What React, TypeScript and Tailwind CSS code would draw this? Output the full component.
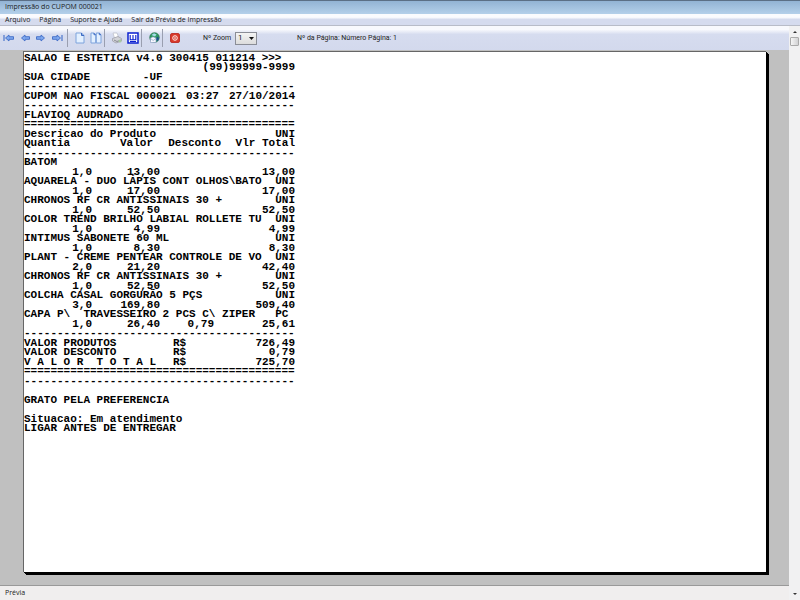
import { ReactNode } from "react";

interface Item {
  name: string;
  unit: string;
  qty: string;
  price: string;
  discount?: string;
  total: string;
}

const items: Item[] = [
  { name: "BATOM", unit: "", qty: "1,0", price: "13,00", total: "13,00" },
  { name: "AQUARELA - DUO LÁPIS CONT OLHOS\\BATO", unit: "UNI", qty: "1,0", price: "17,00", total: "17,00" },
  { name: "CHRONOS RF CR ANTISSINAIS 30 +", unit: "UNI", qty: "1,0", price: "52,50", total: "52,50" },
  { name: "COLOR TREND BRILHO LABIAL ROLLETE TU", unit: "UNI", qty: "1,0", price: "4,99", total: "4,99" },
  { name: "INTIMUS SABONETE 60 ML", unit: "UNI", qty: "1,0", price: "8,30", total: "8,30" },
  { name: "PLANT - CREME PENTEAR CONTROLE DE VO", unit: "UNI", qty: "2,0", price: "21,20", total: "42,40" },
  { name: "CHRONOS RF CR ANTISSINAIS 30 +", unit: "UNI", qty: "1,0", price: "52,50", total: "52,50" },
  { name: "COLCHA CASAL GORGURÃO 5 PÇS", unit: "UNI", qty: "3,0", price: "169,80", total: "509,40" },
  { name: "CAPA P\\  TRAVESSEIRO 2 PCS C\\ ZIPER", unit: "PC ", qty: "1,0", price: "26,40", discount: "0,79", total: "25,61" },
];

const totals = [
  { label: "VALOR PRODUTOS", value: "726,49" },
  { label: "VALOR DESCONTO", value: "0,79" },
  { label: "V A L O R  T O T A L", value: "725,70" },
];

const menus = ["Arquivo", "Página", "Suporte e Ajuda", "Sair da Prévia de Impressão"];

const Arrow = ({ flip, bar }: { flip?: boolean; bar?: boolean }) => (
  <svg viewBox="0 0 12 10" className={`h-[10px] w-[12px] ${flip ? "-scale-x-100" : ""}`}>
    {bar && <path d="M1 2v6" stroke="#4a76cc" strokeWidth="1.2" />}
    <path d="M2.5 5 6 2v1.700h4.500v2.600H6V8z" fill="#7ea8ee" stroke="#3f6cc6" strokeWidth="0.9" strokeLinejoin="round" />
  </svg>
);

const PageIcon = () => (
  <svg viewBox="0 0 12 12" className="h-3 w-3">
    <path d="M2 1h5.5L10 3.5V11H2z" fill="#e3f0ff" stroke="#7da3dc" />
    <path d="M7.5 1v2.5H10" fill="#7da3dc" stroke="#3c69c4" />
  </svg>
);

const TwoPagesIcon = () => (
  <svg viewBox="0 0 12 12" className="h-3 w-3">
    <path d="M1 1h3l1.700 1.700V11H1zM6.300 1h3L11 2.700V11H6.300z" fill="#e3f0ff" stroke="#7da3dc" />
    <path d="M4 1v1.700h1.700M9.300 1v1.700H11" fill="none" stroke="#3c69c4" />
  </svg>
);

const PrinterIcon = () => (
  <svg viewBox="0 0 12 12" className="h-3 w-3">
    <path d="M2 1h4l1.500 4-4 1z" fill="#fff" stroke="#b9bcc6" strokeWidth="0.7" />
    <path d="M1.500 6.500 7 4.500l3.500 2v2.500L5 11 1.500 9z" fill="#d2d3d8" stroke="#989aa3" strokeWidth="0.7" />
    <path d="m3 8 3 1.500 4-1.500" fill="none" stroke="#777a85" strokeWidth="0.8" />
    <circle cx="9" cy="9" r="1.500" fill="#a9c8a0" />
  </svg>
);

const WordIcon = () => (
  <svg viewBox="0 0 12 12" className="h-3 w-3">
    <rect x="1" y="1" width="10" height="10" fill="#fff" stroke="#0a1fd0" strokeWidth="1.500" />
    <path d="M3.200 3v4.800h5.600V3M6 3v4.800M3 9.500h6" fill="none" stroke="#0a1fd0" strokeWidth="1.100" />
  </svg>
);

const SendIcon = () => (
  <svg viewBox="0 0 12 12" className="h-3 w-3">
    <circle cx="6.500" cy="5.500" r="4.800" fill="#2f9a62" stroke="#176341" strokeWidth="0.6" />
    <path d="M3.500 3 6 1.200 8.500 2.500 7 4.500z" fill="#a5dce8" />
    <path d="M9 4.500 11 6l-1 3-2-1z" fill="#1c4f8f" />
    <path d="M2.500 6 5 4.800 8 6v4.500H2.500z" fill="#f7f8ff" stroke="#8398bd" strokeWidth="0.6" />
    <path d="m2.500 6.500 2.700 2L8 6.500" fill="none" stroke="#8398bd" strokeWidth="0.6" />
  </svg>
);

const CloseIcon = () => (
  <svg viewBox="0 0 12 12" className="h-3 w-3">
    <rect x="1.500" y="1.500" width="9" height="9" rx="1.500" fill="#d93a2b" stroke="#b81f18" strokeWidth="0.8" />
    <circle cx="6" cy="6" r="2.300" fill="none" stroke="#fff" strokeWidth="0.9" />
    <path d="M6 4.800v2.400" stroke="#fff" strokeWidth="0.9" />
  </svg>
);

const ToolButton = ({ label, children }: { label: string; children: ReactNode }) => (
  <button type="button" aria-label={label} className="flex h-4 w-4 shrink-0 items-center justify-center">
    {children}
  </button>
);

const Separator = () => <span className="h-[18px] w-px shrink-0 bg-[#9a9fb0]" />;

const Rule = ({ char }: { char: string }) => (
  <tr>
    <td colSpan={5}>{char.repeat(41)}</td>
  </tr>
);

const TextRow = ({ text, right }: { text: string; right?: boolean }) => (
  <tr>
    <td colSpan={5} className={right ? "text-right" : ""}>{text || "\u00a0"}</td>
  </tr>
);

const ItemRows = ({ item }: { item: Item }) => (
  <>
    <tr>
      <td colSpan={4}>{item.name}</td>
      <td className="text-right">{item.unit}</td>
    </tr>
    <tr className="text-right">
      <td>{item.qty}</td>
      <td>{item.price}</td>
      <td className="pr-[7px]">{item.discount}</td>
      <td colSpan={2}>{item.total}</td>
    </tr>
  </>
);

const Receipt = () => (
  <table className="mt-px w-[271px] table-fixed border-collapse whitespace-pre font-['Liberation_Mono',monospace] text-[11px] font-bold text-black [&_tr:nth-child(even)]:leading-[9px] [&_tr:nth-child(odd)]:leading-[10px]">
    <colgroup>
      <col className="w-[68px]" />
      <col className="w-[68px]" />
      <col className="w-[61px]" />
      <col className="w-[50px]" />
      <col className="w-[24px]" />
    </colgroup>
    <tbody>
      <TextRow text="SALAO E ESTETICA v4.0 300415 011214 >>>" />
      <TextRow text="(99)99999-9999" right />
      <TextRow text="SUA CIDADE        -UF" />
      <Rule char="-" />
      <tr>
        <td colSpan={5}>
          <div className="flex justify-between">
            <span>CUPOM NAO FISCAL 000021</span>
            <span>03:27</span>
            <span>27/10/2014</span>
          </div>
        </td>
      </tr>
      <Rule char="-" />
      <TextRow text="FLAVIOQ AUDRADO" />
      <Rule char="=" />
      <tr>
        <td colSpan={4}>Descricao do Produto</td>
        <td className="text-right">UNI</td>
      </tr>
      <tr className="text-right">
        <td className="text-left">Quantia</td>
        <td className="pr-[7px]">Valor</td>
        <td>Desconto</td>
        <td colSpan={2}>Vlr Total</td>
      </tr>
      <Rule char="-" />
      {items.map((item, i) => (
        <ItemRows key={i} item={item} />
      ))}
      <Rule char="-" />
      {totals.map((t) => (
        <tr key={t.label}>
          <td colSpan={2}>{t.label}</td>
          <td className="pl-[13px]">R$</td>
          <td colSpan={2} className="text-right">{t.value}</td>
        </tr>
      ))}
      <Rule char="=" />
      <Rule char="-" />
      <TextRow text="" />
      <TextRow text="GRATO PELA PREFERENCIA" />
      <TextRow text="" />
      <TextRow text="Situacao: Em atendimento" />
      <TextRow text="LIGAR ANTES DE ENTREGAR" />
    </tbody>
  </table>
);

const Toolbar = () => (
  <div className="flex h-6 shrink-0 items-center bg-linear-to-b from-[#f8f9fd] from-15% via-[#d6dcef] via-35% to-[#d3d9ed] font-['Roboto',sans-serif] text-[7px] text-[#222]">
    <div className="flex items-center pl-px pr-[2px]">
      <ToolButton label="Primeira página"><Arrow bar /></ToolButton>
      <ToolButton label="Página anterior"><Arrow /></ToolButton>
      <ToolButton label="Próxima página"><Arrow flip /></ToolButton>
      <ToolButton label="Última página"><Arrow flip bar /></ToolButton>
    </div>
    <Separator />
    <div className="flex items-center pl-1">
      <ToolButton label="Uma página"><PageIcon /></ToolButton>
      <ToolButton label="Duas páginas"><TwoPagesIcon /></ToolButton>
    </div>
    <Separator />
    <div className="flex items-center pl-1">
      <ToolButton label="Imprimir"><PrinterIcon /></ToolButton>
      <ToolButton label="Exportar para Word"><WordIcon /></ToolButton>
    </div>
    <Separator />
    <div className="flex items-center pl-1">
      <ToolButton label="Enviar"><SendIcon /></ToolButton>
    </div>
    <Separator />
    <div className="flex items-center pl-1">
      <ToolButton label="Fechar"><CloseIcon /></ToolButton>
    </div>
    <label htmlFor="zoom" className="ml-5 w-8 whitespace-nowrap">Nº Zoom</label>
    <span className="relative flex">
      <select id="zoom" className="h-[13px] w-[22px] appearance-none border border-[#8a8d96] bg-linear-to-b from-[#f4f4f4] to-[#dcdcdc] pl-[2px] text-[8px] leading-[10px]">
        <option>1</option>
      </select>
      <svg viewBox="0 0 5 3" className="pointer-events-none absolute right-[3px] top-[5px] h-[3px] w-[5px]">
        <path d="M0 0h5L2.500 3z" fill="#111" />
      </svg>
    </span>
    <span className="ml-10 whitespace-nowrap">Nº da Página: Número Página: 1</span>
  </div>
);

const ScrollBar = () => (
  <div className="flex w-[11px] shrink-0 flex-col items-center justify-between bg-[#f1f1f2]">
    <div className="flex flex-col items-center gap-1 pt-[5px]">
      <button type="button" aria-label="Rolar para cima">
        <svg viewBox="0 0 4 2" className="block h-[2px] w-1"><path d="M0 2h4L2 0z" fill="#333" /></svg>
      </button>
      <div className="h-[9px] w-[9px] rounded-[1px] border border-[#aaa] bg-linear-to-r from-[#f6f6f6] to-[#d2d2d4]" />
    </div>
    <button type="button" aria-label="Rolar para baixo" className="pb-[5px]">
      <svg viewBox="0 0 4 2" className="block h-[2px] w-1"><path d="M0 0h4L2 2z" fill="#333" /></svg>
    </button>
  </div>
);

const App: React.FC = () => {
  return (
    <div className="flex h-screen flex-col overflow-hidden bg-[#f0eeee] font-['Open_Sans',sans-serif] text-[7px] text-[#1a1a1a]">
      <header className="flex h-[14px] shrink-0 items-center border-t border-[#5b6f86] bg-linear-to-b from-[#92b3d4] to-[#b4d0ea] pl-[5px]">
        <h1>Impressão do CUPOM 000021</h1>
      </header>
      <nav className="flex h-3 shrink-0 items-center gap-[9px] border-b border-[#b8bcc8] bg-linear-to-b from-[#fafbfe] from-30% to-[#d5dbee] to-50% pl-[5px]">
        {menus.map((m) => (
          <button key={m} type="button" className="whitespace-nowrap leading-[10px]">{m}</button>
        ))}
      </nav>
      <div className="flex min-h-0 flex-1">
        <div className="flex min-w-0 flex-1 flex-col">
          <Toolbar />
          <main className="flex min-h-0 flex-1 flex-col bg-[#c0c0c0] pb-[13px] pl-[23px] pr-[23px] pt-px">
            <div className="flex-1 border-l border-t border-[#666] bg-white shadow-[1px_1px_0_#000,2px_2px_0_#000,3px_3px_0_#000]">
              <Receipt />
            </div>
          </main>
          <footer className="flex h-[15px] shrink-0 items-center border-t border-[#999] pl-[5px]">Prévia</footer>
        </div>
        <ScrollBar />
      </div>
    </div>
  );
};

export default App;
